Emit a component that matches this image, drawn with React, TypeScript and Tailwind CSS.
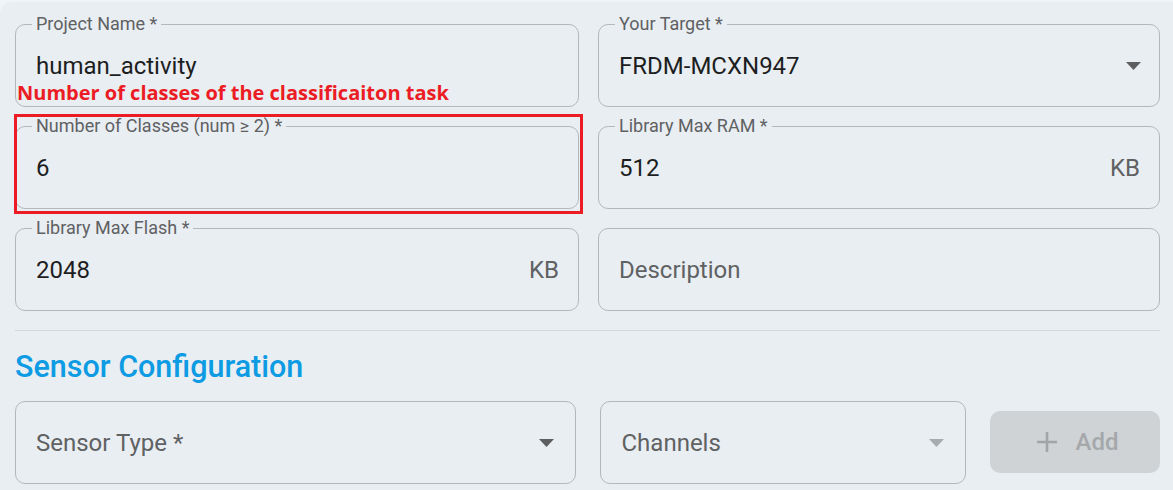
const FONT = "font-['Roboto','Liberation_Sans',sans-serif]";

function ArrowDown({ muted = false }: { muted?: boolean }) {
  return (
    <svg width="15" height="8" viewBox="0 0 15 8" className="shrink-0">
      <path d="M0 0h15L7.5 8z" fill={muted ? "#a9acae" : "#5c5e60"} />
    </svg>
  );
}

function Field({
  label,
  value,
  placeholder,
  adorn,
  select,
  muted,
  className = "",
}: {
  label?: string;
  value?: string;
  placeholder?: string;
  adorn?: string;
  select?: boolean;
  muted?: boolean;
  className?: string;
}) {
  return (
    <div
      className={`relative flex h-[83px] items-center justify-between rounded-[10px] border border-[#b4b8bb] pl-[20px] pr-[18px] ${className}`}
    >
      {label ? (
        <span className="absolute left-[16px] top-[-12px] bg-[#e9eef2] px-[4px] text-[18px] leading-[22px] text-[#5f6163]">
          {label}
        </span>
      ) : null}
      {value ? (
        <span className="text-[24px] leading-[28px] text-[#1d1e1f]">{value}</span>
      ) : (
        <span className="text-[24px] leading-[28px] text-[#5f6163]">{placeholder}</span>
      )}
      {adorn ? (
        <span className="pr-[1px] text-[24px] leading-[28px] text-[#5f6163]">{adorn}</span>
      ) : null}
      {select ? <ArrowDown muted={muted} /> : null}
    </div>
  );
}

export default function App() {
  return (
    <div className={`h-[490px] w-[1173px] overflow-hidden bg-[#f1f4f6] pt-[2px] ${FONT}`}>
      <div className="relative h-full rounded-tl-[12px] bg-[#e9eef2] pl-[15px] pr-[13px] pt-[22px]">
        <div className="grid grid-cols-[564px_562px] gap-x-[19px] gap-y-[19px]">
          <Field label="Project Name *" value="human_activity" />
          <Field label="Your Target *" value="FRDM-MCXN947" select />
          <Field label="Number of Classes (num ≥ 2) *" value="6" />
          <Field label="Library Max RAM *" value="512" adorn="KB" />
          <Field label="Library Max Flash *" value="2048" adorn="KB" />
          <Field placeholder="Description" />
        </div>

        <div className="mt-[19px] h-px bg-[#d3d7da]" />

        <h2 className="mt-[18px] text-[30.5px] font-medium leading-[36px] text-[#0d9be3]">
          Sensor Configuration
        </h2>

        <div className="mt-[16px] flex items-start">
          <Field placeholder="Sensor Type *" select className="w-[562px] pr-[21px]" />
          <Field placeholder="Channels" select muted className="ml-[24px] w-[366px] pr-[21px]" />
          <button className="ml-[24px] mt-[10px] flex h-[62px] w-[170px] items-center justify-center gap-[18px] rounded-[10px] bg-[#cfd3d6] pl-[4px] text-[#a5a8aa]">
            <svg width="22" height="22" viewBox="0 0 22 22">
              <path d="M11 1v20M1 11h20" stroke="#a2a5a7" strokeWidth="2.6" />
            </svg>
            <span className="text-[24px] font-medium leading-[28px]">Add</span>
          </button>
        </div>

        {/* annotation overlay */}
        <span className="absolute left-[17px] top-[78px] font-['Open_Sans','Noto_Sans',sans-serif] text-[20px] font-bold leading-[26px] text-[#ec1c24]">
          Number of classes of the classificaiton task
        </span>
        <div className="absolute left-[14px] top-[112px] h-[100px] w-[569px] border-[3px] border-[#ec1c24]" />
      </div>
    </div>
  );
}
